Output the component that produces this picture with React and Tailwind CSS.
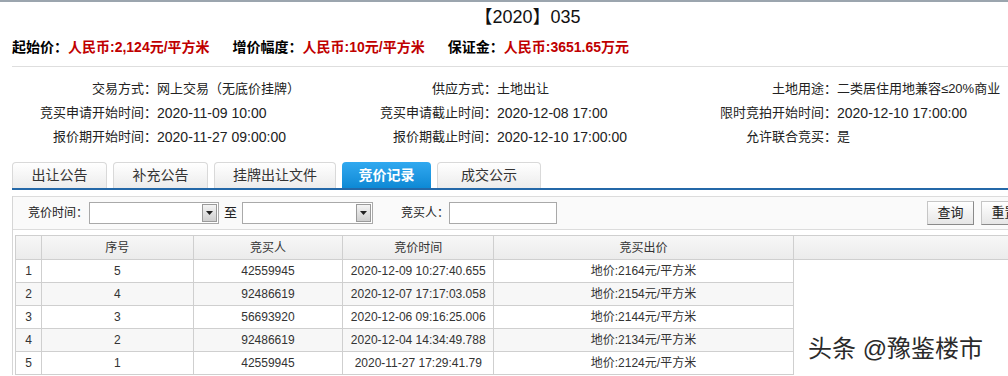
import React from 'react';

const FONT = "font-['Liberation_Sans','Noto_Sans_CJK_SC',sans-serif]";

const info = [
  [
    ['交易方式：', '网上交易（无底价挂牌）'],
    ['供应方式：', '土地出让'],
    ['土地用途：', '二类居住用地兼容≤20%商业'],
  ],
  [
    ['竞买申请开始时间：', '2020-11-09 10:00', true],
    ['竞买申请截止时间：', '2020-12-08 17:00', true],
    ['限时竞拍开始时间：', '2020-12-10 17:00:00', true],
  ],
  [
    ['报价期开始时间：', '2020-11-27 09:00:00', true],
    ['报价期截止时间：', '2020-12-10 17:00:00', true],
    ['允许联合竞买：', '是'],
  ],
];

const tabs = [
  { name: '出让公告', w: 'w-[95px]' },
  { name: '补充公告', w: 'w-[95px]' },
  { name: '挂牌出让文件', w: 'w-[122px]' },
  { name: '竞价记录', w: 'w-[89px]', active: true },
  { name: '成交公示', w: 'w-[104px]' },
];

const bids = [
  ['1', '5', '42559945', '2020-12-09 10:27:40.655', '地价:2164元/平方米'],
  ['2', '4', '92486619', '2020-12-07 17:17:03.058', '地价:2154元/平方米'],
  ['3', '3', '56693920', '2020-12-06 09:16:25.006', '地价:2144元/平方米'],
  ['4', '2', '92486619', '2020-12-04 14:34:49.788', '地价:2134元/平方米'],
  ['5', '1', '42559945', '2020-11-27 17:29:41.79', '地价:2124元/平方米'],
];

const SelectBox = ({ w }) => (
  <div className={`${w} h-[22px] border border-[#a9a9a9] bg-white flex items-center justify-end pr-[1px]`}>
    <div className="w-[15px] h-[18px] border border-[#9a9a9a] bg-linear-to-b from-[#f4f4f4] to-[#cfcfcf] flex items-center justify-center">
      <svg width="7" height="4" viewBox="0 0 7 4">
        <path d="M0 0h7L3.5 4z" fill="#222" />
      </svg>
    </div>
  </div>
);

const Btn = ({ children, className = '' }) => (
  <button className={`w-[47px] h-[24px] border border-[#c6c6c6] border-r-[#8a8a8a] border-b-[#8a8a8a] bg-linear-to-b from-white to-[#e6e6e6] text-[13px] text-[#222] ${className}`}>
    {children}
  </button>
);

export default function App() {
  return (
    <div className={`w-[1008px] h-[376px] overflow-hidden bg-white relative ${FONT}`}>
      <div className="w-[1055px] border-t-2 border-[#9ba5ae]">
        {/* title */}
        <div className="h-[30px] pt-[2px] text-center text-[18px] leading-[26px] text-[#111]">【2020】035</div>

        {/* price line */}
        <div className="ml-[12px] flex gap-[23px] pt-[4px] h-[35px] text-[14px] leading-[22px] font-bold border-b border-[#dedede]">
          <div><span className="text-black">起始价：</span><span className="text-[#c00000]">人民币:2,124元/平方米</span></div>
          <div><span className="text-black">增价幅度：</span><span className="text-[#c00000]">人民币:10元/平方米</span></div>
          <div><span className="text-black">保证金：</span><span className="text-[#c00000]">人民币:3651.65万元</span></div>
        </div>

        {/* info grid */}
        <div className="pt-[10px] pb-[13px] text-[13px] text-[#222]">
          {info.map((row, i) => (
            <div key={i} className="grid grid-cols-[340px_340px_340px] h-[24px] leading-[24px]">
              {row.map(([label, value, num], j) => (
                <div key={j} className="flex whitespace-nowrap">
                  <span className="w-[157px] text-right">{label}</span>
                  <span className={num ? 'text-[14px]' : ''}>{value}</span>
                </div>
              ))}
            </div>
          ))}
        </div>

        {/* tabs */}
        <div className="ml-[12px] flex gap-[6px] border-b-2 border-[#2468a8]">
          {tabs.map((t) => (
            <div
              key={t.name}
              className={
                t.active
                  ? `${t.w} h-[26px] rounded-t-[4px] bg-linear-to-b from-[#30a9f0] to-[#0c89d5] text-white font-bold text-[14px] leading-[26px] text-center`
                  : `${t.w} h-[26px] rounded-t-[4px] border border-b-0 border-[#d9d9d9] bg-linear-to-b from-white to-[#ececec] text-[#333] text-[14px] leading-[25px] text-center`
              }
            >
              {t.name}
            </div>
          ))}
        </div>

        {/* panel */}
        <div className="ml-[12px] mt-[6px] border-l border-[#d6d6d6]">
          <div className="h-[34px] border border-l-0 border-[#dcdcdc] bg-[#fafafa] flex items-center text-[12px] text-[#222]">
            <span className="w-[76px] pl-[15px]">竞价时间：</span>
            <SelectBox w="w-[130px]" />
            <span className="mx-[5px] text-[13px]">至</span>
            <SelectBox w="w-[131px]" />
            <span className="ml-[28px] w-[48px]">竞买人：</span>
            <div className="w-[108px] h-[22px] border border-[#a9a9a9] bg-white" />
            <Btn className="ml-[370px]">查询</Btn>
            <Btn className="ml-[7px]">重置</Btn>
          </div>

          <div className="pl-[2px] pt-[5px]">
            <table className="table-fixed text-[12px] text-[#333]">
              <colgroup>
                <col className="w-[26px]" />
                <col className="w-[152px]" />
                <col className="w-[150px]" />
                <col className="w-[151px]" />
                <col className="w-[300px]" />
                <col className="w-[262px]" />
              </colgroup>
              <thead>
                <tr className="h-[24px] bg-linear-to-b from-[#f7f7f7] to-[#ebebeb]">
                  <th className="border border-[#cfcfcf] font-normal"></th>
                  <th className="border border-[#cfcfcf] font-normal">序号</th>
                  <th className="border border-[#cfcfcf] font-normal">竞买人</th>
                  <th className="border border-[#cfcfcf] font-normal">竞价时间</th>
                  <th className="border border-[#cfcfcf] font-normal">竞买出价</th>
                  <th className="border border-[#cfcfcf] font-normal"></th>
                </tr>
              </thead>
              <tbody>
                {bids.map((r, i) => (
                  <tr key={i} className={`h-[23px] ${i % 2 === 1 ? 'bg-[#f7f7f7]' : 'bg-white'}`}>
                    {r.map((c, j) => (
                      <td key={j} className="border border-[#cfcfcf] text-center whitespace-nowrap">{c}</td>
                    ))}
                    <td className="bg-white"></td>
                  </tr>
                ))}
              </tbody>
            </table>
          </div>
        </div>
      </div>

      {/* watermark */}
      <div className="absolute left-[808px] top-[334px] text-[24px] leading-[30px] text-[#2b2b2b] whitespace-nowrap [text-shadow:0_0_2px_#fff,0_0_2px_#fff]">
        头条 @豫鉴楼市
      </div>
    </div>
  );
}
